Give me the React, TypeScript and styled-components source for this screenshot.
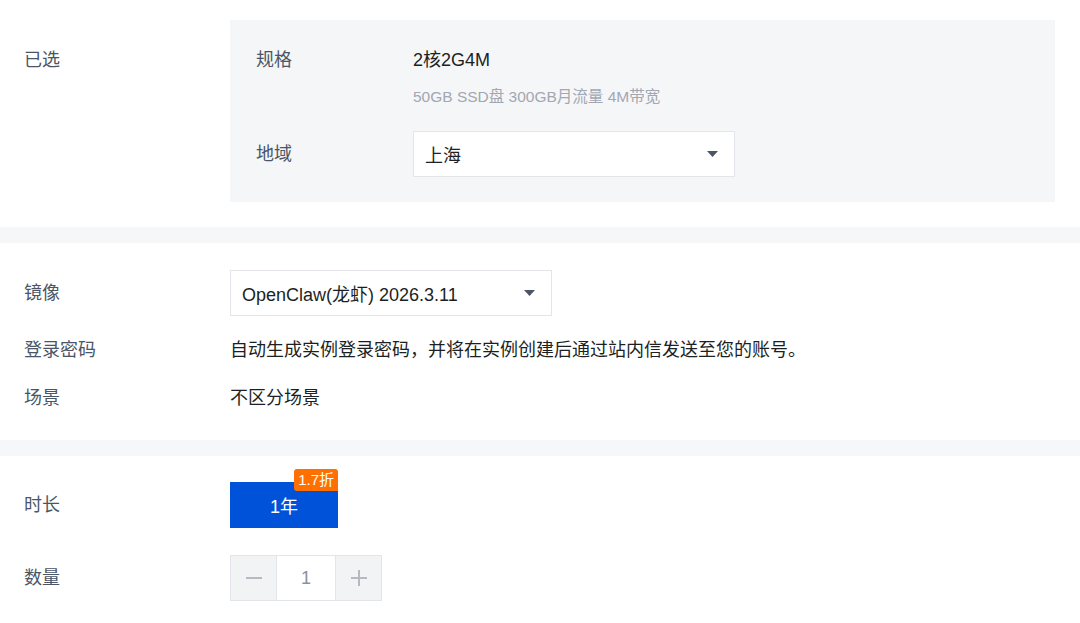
import React from "react";
import styled, { createGlobalStyle } from "styled-components";

const GlobalStyle = createGlobalStyle`
  html, body {
    margin: 0;
    padding: 0;
    background: #f6f7f9;
    font-family: "Liberation Sans", "Noto Sans CJK SC", sans-serif;
  }
  * { box-sizing: border-box; }
`;

const Page = styled.div`
  width: 1080px;
  height: 623px;
  overflow: hidden;
  display: flex;
  flex-direction: column;
  gap: 16px;
  background: #f6f7f9;
`;

const Section = styled.div<{ $pt: number; $pb: number }>`
  background: #ffffff;
  padding: ${(p) => p.$pt}px 25px ${(p) => p.$pb}px 24px;
  display: flex;
  flex-direction: column;
`;

const Row = styled.div<{ $mt?: number }>`
  display: grid;
  grid-template-columns: 206px 1fr;
  align-items: center;
  margin-top: ${(p) => p.$mt ?? 0}px;
`;

const Label = styled.div<{ $align?: "start" | "center" | "end"; $offset?: number }>`
  font-size: 18px;
  line-height: 24px;
  color: #4b5565;
  align-self: ${(p) => p.$align ?? "center"};
  margin-top: ${(p) => (p.$align === "start" ? p.$offset ?? 0 : 0)}px;
  margin-bottom: ${(p) => (p.$align === "end" ? p.$offset ?? 0 : 0)}px;
`;

const Value = styled.div`
  font-size: 18px;
  line-height: 24px;
  color: #1c1f23;
`;

const SelectedBox = styled.div`
  background: #f5f6f8;
  padding: 28px 26px 25px;
  display: flex;
  flex-direction: column;
`;

const InnerRow = styled.div<{ $mt?: number }>`
  display: grid;
  grid-template-columns: 157px 1fr;
  align-items: center;
  margin-top: ${(p) => p.$mt ?? 0}px;
`;

const SpecBlock = styled.div`
  display: flex;
  flex-direction: column;
  gap: 15px;
`;

const SubText = styled.div`
  font-size: 15.5px;
  line-height: 20px;
  color: #a2a7b1;
`;

const SelectBox = styled.div<{ $w: number }>`
  width: ${(p) => p.$w}px;
  height: 46px;
  background: #ffffff;
  border: 1px solid #e3e5ea;
  display: flex;
  align-items: center;
  justify-content: space-between;
  padding: 0 16px 0 11px;
  font-size: 18px;
  color: #1c1f23;
`;

const Caret = () => (
  <svg width="11" height="6" viewBox="0 0 11 6">
    <path d="M0 0 L11 0 L5.5 6 Z" fill="#4b5565" />
  </svg>
);

const DurationWrap = styled.div`
  position: relative;
  width: 108px;
  padding-top: 13px;
`;

const DurationButton = styled.div`
  width: 108px;
  height: 46px;
  background: #0052d9;
  color: #ffffff;
  font-size: 18px;
  display: flex;
  align-items: center;
  justify-content: center;
`;

const Badge = styled.div`
  position: absolute;
  top: 0;
  right: 0;
  height: 22px;
  padding: 0 4px;
  background: #ff7000;
  color: #ffffff;
  font-size: 15px;
  line-height: 22px;
  border-radius: 3px 3px 0 3px;
`;

const Stepper = styled.div`
  display: flex;
  width: 152px;
  height: 46px;
  border: 1px solid #e3e5ea;
`;

const StepBtn = styled.div`
  width: 45px;
  background: #f2f3f5;
  display: flex;
  align-items: center;
  justify-content: center;
`;

const StepInput = styled.div`
  flex: 1;
  background: #ffffff;
  border-left: 1px solid #e3e5ea;
  border-right: 1px solid #e3e5ea;
  display: flex;
  align-items: center;
  justify-content: center;
  font-size: 18px;
  color: #8c929c;
`;

const Minus = () => (
  <svg width="18" height="18" viewBox="0 0 18 18">
    <path d="M1 9 H17" stroke="#b4b9c2" strokeWidth="2" />
  </svg>
);

const Plus = () => (
  <svg width="18" height="18" viewBox="0 0 18 18">
    <path d="M1 9 H17 M9 1 V17" stroke="#b4b9c2" strokeWidth="2" />
  </svg>
);

export default function App() {
  return (
    <Page>
      <GlobalStyle />
      <Section $pt={20} $pb={25}>
        <Row>
          <Label $align="start" $offset={28}>已选</Label>
          <SelectedBox>
            <InnerRow>
              <Label $align="start">规格</Label>
              <SpecBlock>
                <Value>2核2G4M</Value>
                <SubText>50GB SSD盘 300GB月流量 4M带宽</SubText>
              </SpecBlock>
            </InnerRow>
            <InnerRow $mt={24}>
              <Label>地域</Label>
              <SelectBox $w={322}>
                <span>上海</span>
                <Caret />
              </SelectBox>
            </InnerRow>
          </SelectedBox>
        </Row>
      </Section>

      <Section $pt={27} $pb={30}>
        <Row>
          <Label>镜像</Label>
          <SelectBox $w={322}>
            <span>OpenClaw(龙虾) 2026.3.11</span>
            <Caret />
          </SelectBox>
        </Row>
        <Row $mt={22}>
          <Label>登录密码</Label>
          <Value>自动生成实例登录密码，并将在实例创建后通过站内信发送至您的账号。</Value>
        </Row>
        <Row $mt={24}>
          <Label>场景</Label>
          <Value>不区分场景</Value>
        </Row>
      </Section>

      <Section $pt={13} $pb={30}>
        <Row>
          <Label $align="end" $offset={11}>时长</Label>
          <DurationWrap>
            <Badge>1.7折</Badge>
            <DurationButton>1年</DurationButton>
          </DurationWrap>
        </Row>
        <Row $mt={27}>
          <Label>数量</Label>
          <Stepper>
            <StepBtn>
              <Minus />
            </StepBtn>
            <StepInput>1</StepInput>
            <StepBtn>
              <Plus />
            </StepBtn>
          </Stepper>
        </Row>
      </Section>
    </Page>
  );
}
